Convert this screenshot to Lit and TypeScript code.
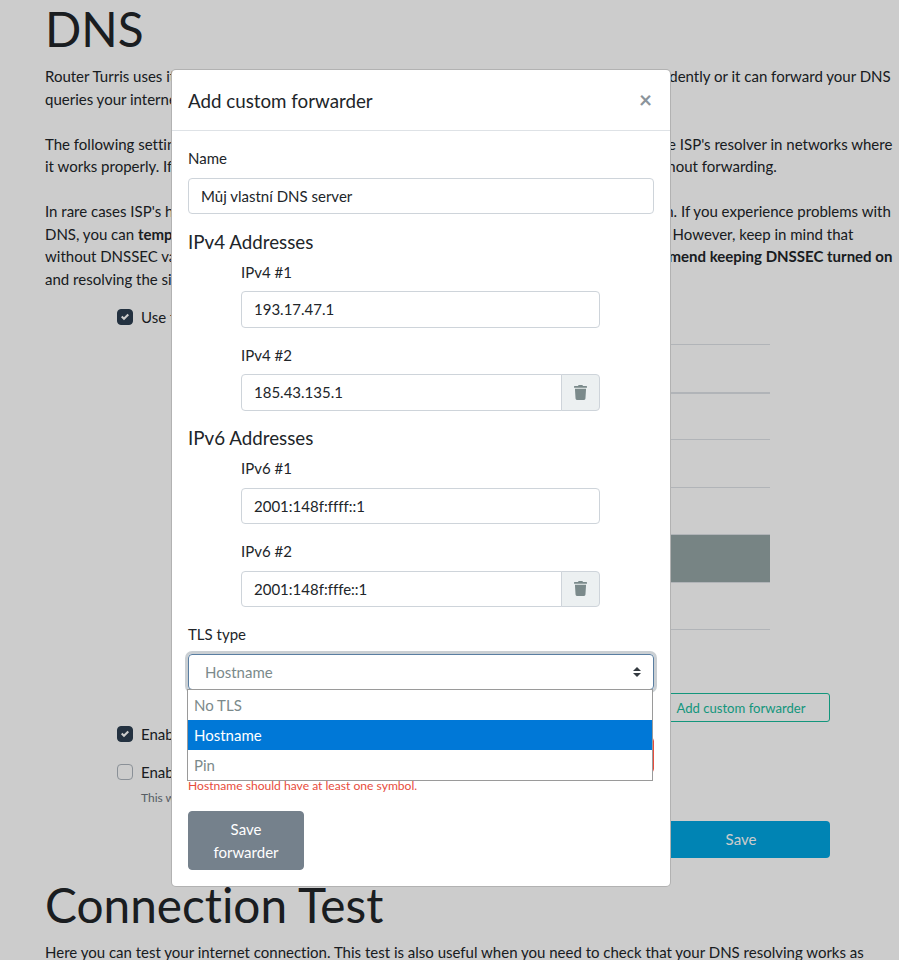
import { LitElement, html, css } from "lit";
import { customElement } from "lit/decorators.js";

const trash = html`<svg class="trash" viewBox="0 0 448 512" aria-hidden="true">
  <path fill="currentColor" d="M432 32H312l-9.4-18.7A24 24 0 0 0 281.1 0H166.8a23.72 23.72 0 0 0-21.4 13.3L136 32H16A16 16 0 0 0 0 48v32a16 16 0 0 0 16 16h416a16 16 0 0 0 16-16V48a16 16 0 0 0-16-16zM53.2 467a48 48 0 0 0 47.9 45h245.8a48 48 0 0 0 47.9-45L416 128H32z"/>
</svg>`;

const check = html`<svg viewBox="0 0 8 8" aria-hidden="true">
  <path fill="#fff" d="M6.564.75l-3.59 3.612-1.538-1.55L0 4.26 2.974 7.25 8 2.193z"/>
</svg>`;

@customElement("app-root")
export class AppRoot extends LitElement {
  static styles = css`
    :host {
      display: block;
      position: relative;
      height: 960px;
      overflow: hidden;
      background: #fff;
      color: #212529;
      font-family: "Lato", "Open Sans", sans-serif;
      font-size: 15px;
      line-height: 22.5px;
      font-variant-ligatures: none;
    }
    * {
      box-sizing: border-box;
    }

    /* page behind the dialog */
    .page {
      padding: 0 0 0 45px;
    }
    h1 {
      margin: 0 0 7.5px;
      font-size: 47.75px;
      font-weight: 400;
      line-height: 57.6px;
    }
    p {
      margin: 0 0 22.5px;
      white-space: nowrap;
    }
    .dnssec-note {
      margin-bottom: 16px;
    }
    .narrow {
      margin-left: 72px;
      width: 713px;
    }
    .check-row {
      display: flex;
      align-items: center;
      gap: 8px;
      height: 22.5px;
    }
    .box {
      flex: none;
      display: flex;
      align-items: center;
      justify-content: center;
      width: 16px;
      height: 16px;
      border: 1px solid #adb5bd;
      border-radius: 4px;
      background: #fff;
    }
    .box.on {
      border-color: #2c3e50;
      background: #2c3e50;
    }
    .box svg {
      width: 8px;
      height: 8px;
    }
    .table {
      margin: 15.5px 60px 0 60px;
      border-bottom: 1px solid #dee2e6;
    }
    .tr {
      height: 47.5px;
      border-top: 1px solid #dee2e6;
    }
    .tr.first {
      border-bottom: 2px solid #dee2e6;
      height: 50px;
    }
    .tr.first + .tr {
      border-top: 0;
      height: 45px;
    }
    .tr.active {
      background: #95a5a6;
    }
    .add {
      display: block;
      margin: 63px 0 0 auto;
      width: 178px;
      height: 29px;
      padding: 1px 0 0;
      border: 1px solid #18bc9c;
      border-radius: 3px;
      background: transparent;
      color: #18bc9c;
      font: inherit;
      font-size: 13.125px;
    }
    .dnssec {
      margin-top: 1px;
    }
    .dhcp {
      margin-top: 15.5px;
    }
    .hint {
      margin: 5px 0 0 24px;
      color: #6c757d;
      font-size: 12px;
      line-height: 18px;
    }
    .save {
      display: block;
      margin: 14.5px 0 0 auto;
      width: 178px;
      height: 36.5px;
      border: 0;
      border-radius: 4px;
      background: #00a6e2;
      color: #fff;
      font: inherit;
    }
    .second {
      margin-top: 18.5px;
    }

    /* backdrop + dialog */
    .backdrop {
      position: absolute;
      inset: 0;
      background: rgba(0, 0, 0, 0.2);
      padding: 69px 0 0 171px;
    }
    .modal {
      width: 500px;
      background: #fff;
      border: 1px solid rgba(0, 0, 0, 0.3);
      border-radius: 5px;
    }
    .modal-header {
      display: flex;
      align-items: flex-start;
      justify-content: space-between;
      padding: 16px;
      border-bottom: 1px solid #dee2e6;
    }
    .modal-title {
      padding-top: 1px;
      font-size: 18.75px;
      line-height: 27px;
    }
    .close {
      font-weight: 700;
      font-size: 22.5px;
      line-height: 28px;
      color: #8b949b;
      margin-right: 2px;
    }
    .modal-body {
      padding: 16px;
    }
    .group {
      margin-bottom: 16px;
    }
    .group.sub {
      margin-left: 53px;
      width: 359px;
    }
    label {
      display: block;
      margin-bottom: 8px;
    }
    h3 {
      margin: 0 0 8px;
      padding-top: 0.5px;
      font-size: 18.75px;
      font-weight: 400;
      line-height: 22px;
    }
    input {
      display: block;
      width: 100%;
      height: 36.5px;
      padding: 6px 12px;
      border: 1px solid #ced4da;
      border-radius: 4px;
      background: #fff;
      color: #212529;
      font: inherit;
      outline: none;
    }
    input.bad {
      border-color: #e74c3c;
    }
    .input-group {
      display: flex;
    }
    .input-group input {
      flex: 1;
      min-width: 0;
      border-radius: 4px 0 0 4px;
    }
    .append {
      flex: none;
      display: flex;
      align-items: center;
      justify-content: center;
      width: 39px;
      margin-left: -1px;
      border: 1px solid #ced4da;
      border-radius: 0 4px 4px 0;
      background: #ecf0f1;
      color: #7b8a8b;
    }
    .trash {
      width: 13px;
      height: 15px;
    }
    .select {
      position: relative;
      display: flex;
      align-items: center;
      justify-content: space-between;
      height: 36.5px;
      padding: 0 12px 0 16px;
      border: 1px solid #597ea2;
      border-radius: 4px;
      box-shadow: 0 0 0 3px rgba(44, 62, 80, 0.25);
      color: #7b8a8b;
    }
    .updown {
      width: 8px;
      height: 10px;
    }
    .menu {
      position: absolute;
      top: 34px;
      left: -2px;
      width: 466px;
      border: 1px solid #9a9a9a;
      background: #fff;
      color: #7b8a8b;
    }
    .option {
      height: 30px;
      padding: 0 6px;
      line-height: 30px;
    }
    .option.sel {
      background: #0078d7;
      color: #fff;
    }
    .error {
      margin-top: 4px;
      color: #e74c3c;
      font-size: 12.1px;
      line-height: 18px;
    }
    .submit {
      display: block;
      width: 116px;
      padding: 6px 12px;
      border: 1px solid #2c3e50;
      border-radius: 4px;
      background: #2c3e50;
      color: #fff;
      font: inherit;
      opacity: 0.65;
    }
  `;

  private address(label: string, value: string, removable: boolean) {
    return html`<div class="group sub">
      <label>${label}</label>
      ${removable
        ? html`<div class="input-group">
            <input .value=${value} />
            <div class="append">${trash}</div>
          </div>`
        : html`<input .value=${value} />`}
    </div>`;
  }

  render() {
    return html`
      <div class="page">
        <h1>DNS</h1>
        <p>
          Router Turris uses its own DNS resolver with DNSSEC support. It is capable of working independently or it can forward your DNS<br />
          queries your internet service provider's DNS resolver.
        </p>
        <p>
          The following settings apply to both IPv4 and IPv6. In general, it's usually much better to use the ISP's resolver in networks where<br />
          it works properly. If this does not work for some reason, it is possible to use direct resolving without forwarding.
        </p>
        <p class="dnssec-note">
          In rare cases ISP's have improperly configured DNS servers that are incompatible with validation. If you experience problems with<br />
          DNS, you can <b>temporarily disable DNSSEC validation</b> to determine the source of your problem. However, keep in mind that<br />
          without DNSSEC validation, you're vulnerable to various spoofing attacks. Therefore, <b>we recommend keeping DNSSEC turned on</b><br />
          and resolving the situation with your ISP.
        </p>
        <div class="narrow">
          <div class="check-row"><span class="box on">${check}</span>Use forwarding</div>
          <div class="table">
            <div class="tr first"></div>
            <div class="tr"></div>
            <div class="tr"></div>
            <div class="tr"></div>
            <div class="tr active"></div>
            <div class="tr"></div>
          </div>
          <button class="add">Add custom forwarder</button>
          <div class="check-row dnssec"><span class="box on">${check}</span>Enable DNSSEC</div>
          <div class="check-row dhcp"><span class="box"></span>Enable DNS from DHCP</div>
          <div class="hint">This will enable your DNS resolver to place DHCP client's names among other DNS records.</div>
          <button class="save">Save</button>
        </div>
        <h1 class="second">Connection Test</h1>
        <p>Here you can test your internet connection. This test is also useful when you need to check that your DNS resolving works as</p>
      </div>

      <div class="backdrop">
        <div class="modal">
          <div class="modal-header">
            <div class="modal-title">Add custom forwarder</div>
            <span class="close">×</span>
          </div>
          <div class="modal-body">
            <div class="group">
              <label>Name</label>
              <input .value=${"Můj vlastní DNS server"} />
            </div>
            <h3>IPv4 Addresses</h3>
            ${this.address("IPv4 #1", "193.17.47.1", false)}
            ${this.address("IPv4 #2", "185.43.135.1", true)}
            <h3>IPv6 Addresses</h3>
            ${this.address("IPv6 #1", "2001:148f:ffff::1", false)}
            ${this.address("IPv6 #2", "2001:148f:fffe::1", true)}
            <div class="group">
              <label>TLS type</label>
              <div class="select">
                <span>Hostname</span>
                <svg class="updown" viewBox="0 0 4 5" aria-hidden="true">
                  <path fill="#343a40" d="M2 0L0 2h4zm0 5L0 3h4z" />
                </svg>
                <div class="menu">
                  <div class="option">No TLS</div>
                  <div class="option sel">Hostname</div>
                  <div class="option">Pin</div>
                </div>
              </div>
            </div>
            <div class="group">
              <label>Hostname</label>
              <input class="bad" />
              <div class="error">Hostname should have at least one symbol.</div>
            </div>
            <button class="submit">Save forwarder</button>
          </div>
        </div>
      </div>
    `;
  }
}
